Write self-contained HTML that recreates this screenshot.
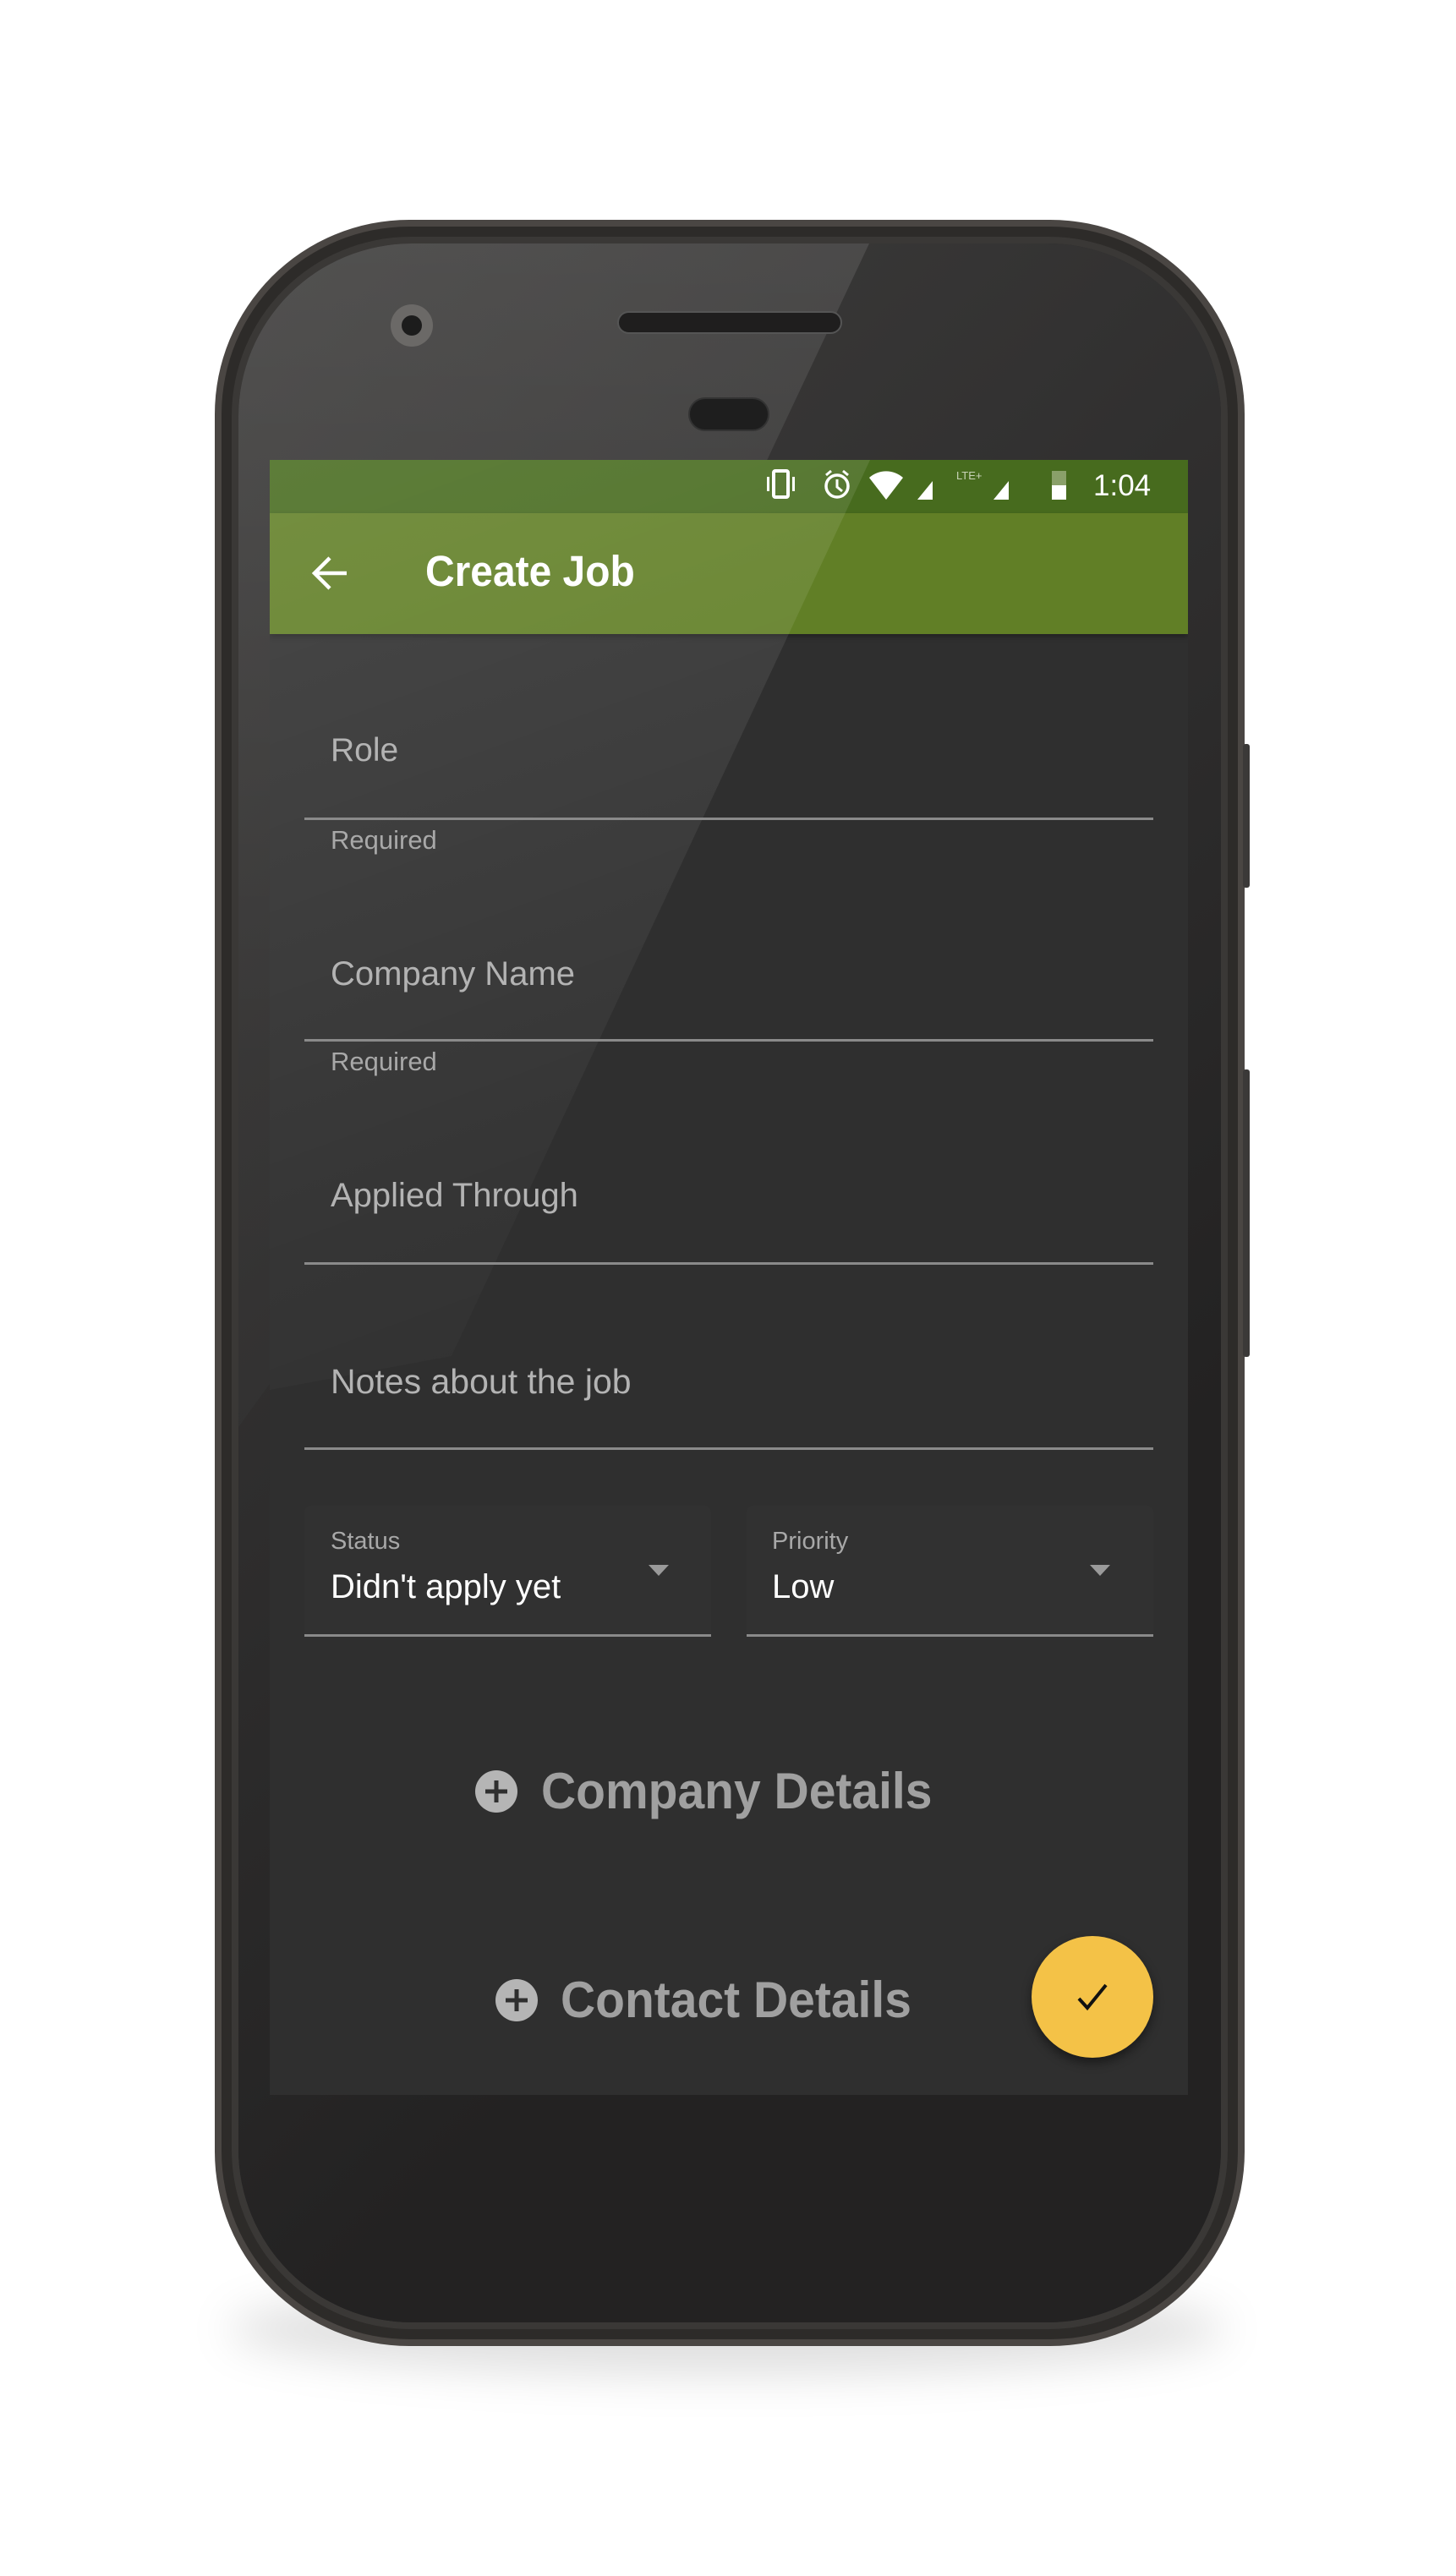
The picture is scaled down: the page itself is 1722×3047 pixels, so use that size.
<!DOCTYPE html>
<html><head><meta charset="utf-8"><style>
html,body{margin:0;padding:0;background:#fff;}
body{width:1722px;height:3047px;position:relative;overflow:hidden;font-family:"Liberation Sans",sans-serif;}
.a{position:absolute;}
.t{position:absolute;white-space:nowrap;line-height:1;}
.line{position:absolute;height:3px;background:#8a8a8a;}
</style></head><body>
<div class="a" style="left:270px;top:2700px;width:1180px;height:110px;border-radius:50%;background:rgba(0,0,0,0.12);filter:blur(25px)"></div>
<div class="a" style="left:254px;top:260px;width:1218px;height:2515px;border-radius:230px;background:#4a4643;"></div>
<div class="a" style="left:262px;top:268px;width:1202px;height:2499px;border-radius:222px;background:#2d2b29;"></div>
<div class="a" style="left:274px;top:280px;width:1178px;height:2475px;border-radius:212px;background:#3a3836;"></div>
<div class="a" style="left:282px;top:288px;width:1162px;height:2459px;border-radius:205px;background:#242323;overflow:hidden;">
  <div class="a" style="left:0;top:0;width:1162px;height:2459px;background:linear-gradient(135deg,#3f3e3d 0%,#2f2e2e 40%,#232222 70%)"></div>
  <div class="a" style="left:0;top:0;width:1162px;height:2459px;background:linear-gradient(180deg,rgba(255,255,255,0.1),rgba(255,255,255,0.02) 40%,rgba(255,255,255,0));clip-path:polygon(0 0,746px 0,246px 1060px,0 1400px)"></div>
</div>
<div class="a" style="left:1470px;top:880px;width:8px;height:170px;background:#3b3938;border-radius:3px"></div>
<div class="a" style="left:1470px;top:1265px;width:8px;height:340px;background:#3b3938;border-radius:3px"></div>
<div class="a" style="left:462px;top:360px;width:50px;height:50px;border-radius:50%;background:#6b6967"></div>
<div class="a" style="left:475px;top:373px;width:24px;height:24px;border-radius:50%;background:#1c1c1c"></div>
<div class="a" style="left:730px;top:368px;width:266px;height:27px;border-radius:14px;background:#1f1e1e;border:2px solid #555;box-sizing:border-box"></div>
<div class="a" style="left:814px;top:470px;width:96px;height:40px;border-radius:20px;background:#1e1e1e;border:2px solid #333;box-sizing:border-box"></div>

<div class="a" style="left:319px;top:544px;width:1086px;height:1934px;background:#2f2f2f;overflow:hidden">
  <div class="a" style="left:0;top:0;width:1086px;height:63px;background:#476b1e"></div>
  <div class="a" style="left:0;top:63px;width:1086px;height:143px;background:#617f26;box-shadow:0 3px 6px rgba(0,0,0,0.3)"></div>
  <div class="a" style="left:0;top:0;width:1086px;height:1934px;background:linear-gradient(160deg,rgba(255,255,255,0.12),rgba(255,255,255,0.03) 40%,rgba(255,255,255,0) 60%);clip-path:polygon(0 0,710px 0,215px 1060px,0 1100px)"></div>
</div>
<svg class="a" style="left:905px;top:553px" width="320" height="44" viewBox="0 0 320 44">
  <g fill="#fff">
    <rect x="10" y="4" width="17" height="31" rx="2" fill="none" stroke="#fff" stroke-width="4"/>
    <rect x="2" y="11" width="3" height="17"/><rect x="32" y="11" width="3" height="17"/>
    <circle cx="85" cy="22" r="13" fill="none" stroke="#fff" stroke-width="3.5"/>
    <path d="M85 14v9l6 5" stroke="#fff" stroke-width="3" fill="none"/>
    <path d="M72 9l6-5M98 9l-6-5" stroke="#fff" stroke-width="3"/>
    <path d="M123 12a30 30 0 0 1 40 0L143 38z"/>
    <path d="M180 38L198 16V38z"/>
    <text x="226" y="14" font-size="13" fill="#c9d4b8" font-family="Liberation Sans">LTE+</text>
    <path d="M270 38L288 16V38z"/>
  </g>
</svg>
<div class="a" style="left:1244px;top:557px;width:17px;height:34px;background:#8aa06a"></div>
<div class="a" style="left:1244px;top:574px;width:17px;height:17px;background:#fff"></div>
<div class="t" style="left:1293px;top:557px;font-size:35px;color:#fff">1:04</div>
<svg class="a" style="left:368px;top:656px" width="46" height="44" viewBox="0 0 46 44"><path d="M42 22H6M22 4L4 22l18 18" stroke="#fff" stroke-width="4.5" fill="none"/></svg>
<div class="t" style="left:503px;top:650px;font-size:51px;color:#fff;font-weight:bold;transform:scaleX(0.94);transform-origin:left">Create Job</div>

<div class="t" style="left:391px;top:868px;font-size:39px;color:#b3b3b3">Role</div>
<div class="line" style="left:360px;top:967px;width:1004px"></div>
<div class="t" style="left:391px;top:978px;font-size:31px;color:#a8a8a8">Required</div>

<div class="t" style="left:391px;top:1132px;font-size:40px;color:#b3b3b3">Company Name</div>
<div class="line" style="left:360px;top:1229px;width:1004px"></div>
<div class="t" style="left:391px;top:1240px;font-size:31px;color:#a8a8a8">Required</div>

<div class="t" style="left:391px;top:1394px;font-size:40px;color:#b3b3b3">Applied Through</div>
<div class="line" style="left:360px;top:1493px;width:1004px"></div>

<div class="t" style="left:391px;top:1614px;font-size:41px;color:#b3b3b3">Notes about the job</div>
<div class="line" style="left:360px;top:1712px;width:1004px"></div>

<div class="a" style="left:360px;top:1781px;width:481px;height:154px;background:#313131;border-radius:8px 8px 0 0"></div>
<div class="a" style="left:883px;top:1781px;width:481px;height:154px;background:#313131;border-radius:8px 8px 0 0"></div>
<div class="t" style="left:391px;top:1809px;font-size:29px;color:#a8a8a8">Status</div>
<div class="t" style="left:391px;top:1857px;font-size:40px;color:#fff">Didn't apply yet</div>
<div class="a" style="left:767px;top:1851px;width:0;height:0;border-left:12px solid transparent;border-right:12px solid transparent;border-top:13px solid #9a9a9a"></div>
<div class="line" style="left:360px;top:1933px;width:481px"></div>
<div class="t" style="left:913px;top:1809px;font-size:29px;color:#a8a8a8">Priority</div>
<div class="t" style="left:913px;top:1857px;font-size:40px;color:#fff">Low</div>
<div class="a" style="left:1289px;top:1851px;width:0;height:0;border-left:12px solid transparent;border-right:12px solid transparent;border-top:13px solid #9a9a9a"></div>
<div class="line" style="left:883px;top:1933px;width:481px"></div>

<svg class="a" style="left:561px;top:2093px" width="52" height="52" viewBox="0 0 52 52"><circle cx="26" cy="26" r="25" fill="#b5b5b5"/><path d="M26 13v26M13 26h26" stroke="#2f2f2f" stroke-width="5"/></svg>
<div class="t" style="left:640px;top:2089px;font-size:60px;color:#a0a0a0;font-weight:bold;transform:scaleX(0.95);transform-origin:left">Company Details</div>
<svg class="a" style="left:585px;top:2340px" width="52" height="52" viewBox="0 0 52 52"><circle cx="26" cy="26" r="25" fill="#b5b5b5"/><path d="M26 13v26M13 26h26" stroke="#2f2f2f" stroke-width="5"/></svg>
<div class="t" style="left:663px;top:2336px;font-size:60px;color:#a0a0a0;font-weight:bold;transform:scaleX(0.95);transform-origin:left">Contact Details</div>

<div class="a" style="left:1220px;top:2290px;width:144px;height:144px;border-radius:50%;background:#f4c247;box-shadow:0 6px 12px rgba(0,0,0,0.45)"></div>
<svg class="a" style="left:1268px;top:2338px" width="48" height="48" viewBox="0 0 48 48"><path d="M8 26l10 11L40 10" stroke="#111" stroke-width="4" fill="none"/></svg>
</body></html>
